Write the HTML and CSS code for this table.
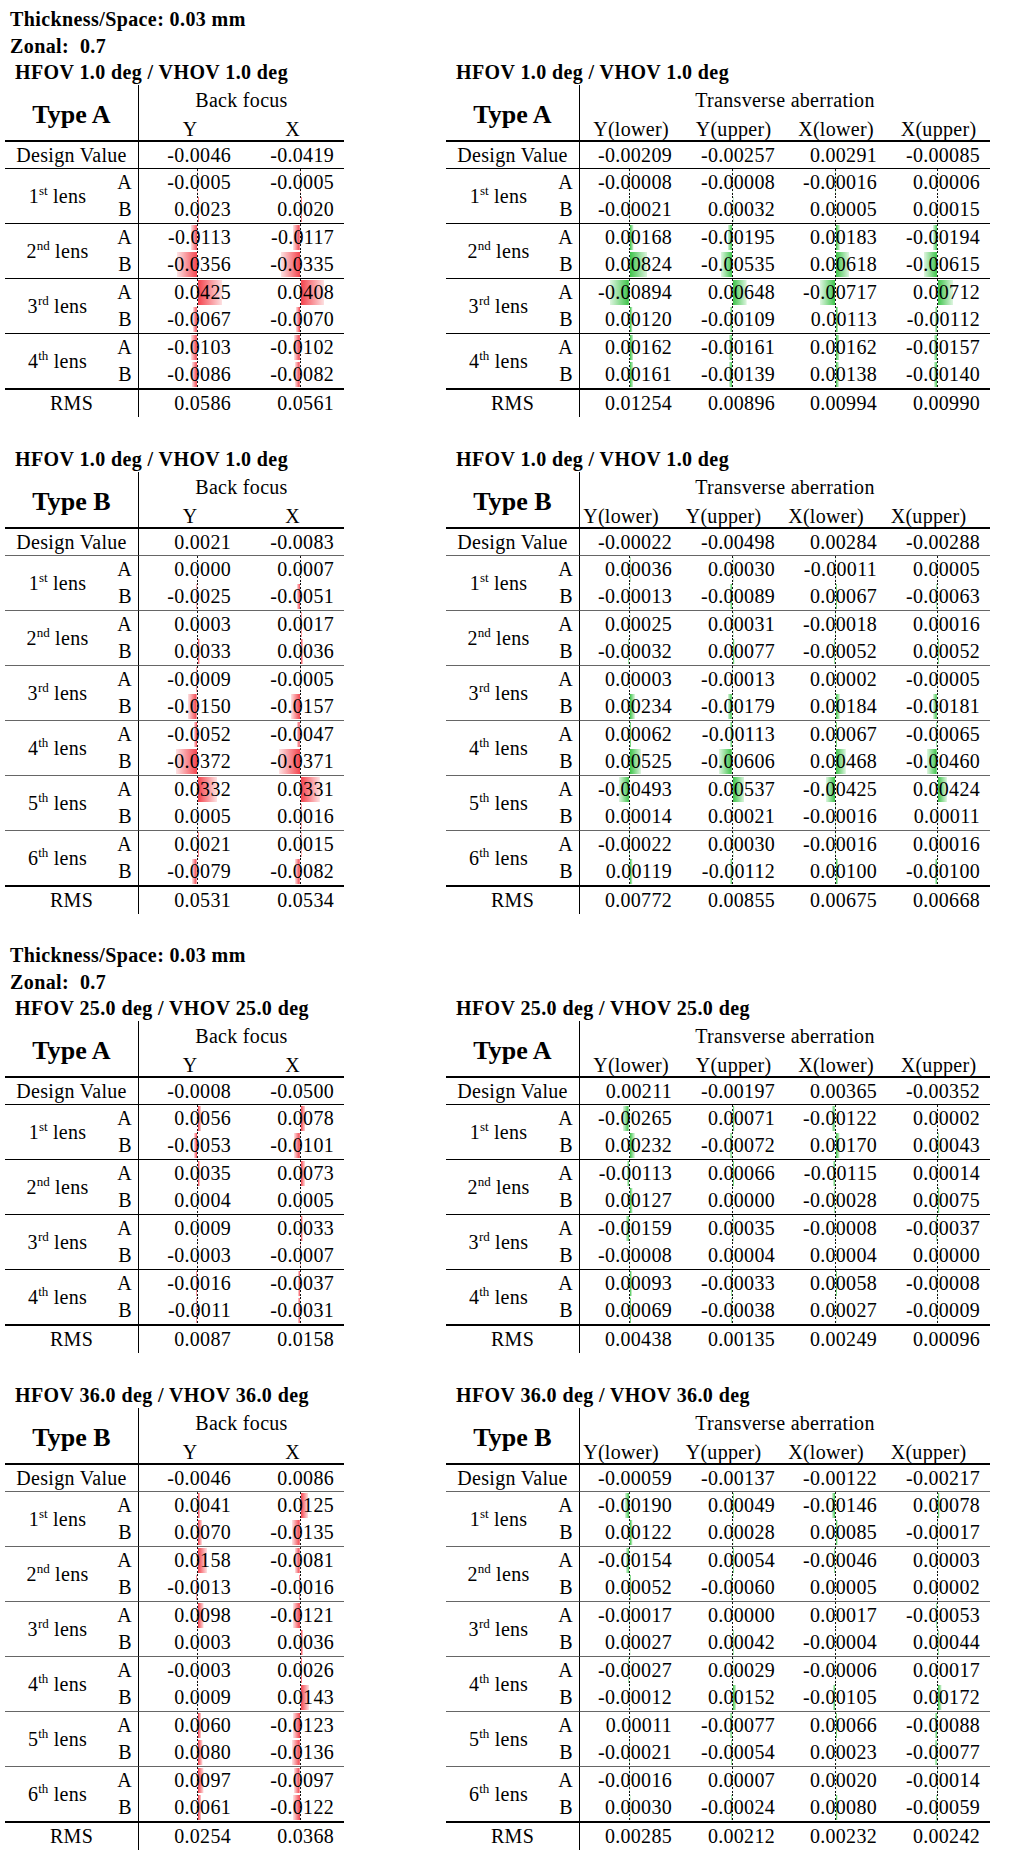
FILE: index.html
```html
<!DOCTYPE html>
<html lang="en">
<head>
<meta charset="utf-8">
<title>Tolerance tables</title>
<link rel="stylesheet" href="styles.css">
</head>
<body>

<div class="sec">
  <div class="meta">Thickness/Space: 0.03 mm</div>
  <div class="meta">Zonal:&nbsp; 0.7</div>

  <div class="pair">
    <div class="bl">
      <div class="ttl">HFOV 1.0 deg / VHOV 1.0 deg</div>
      <div class="tbl tl ta">
        <div class="c type">Type A</div>
        <div class="c grp vl">Back focus</div>
        <div class="c sub vl">Y</div>
        <div class="c sub">X</div>
        <div class="c lbl dsg">Design Value</div>
        <div class="c num dsg vl">-0.0046</div>
        <div class="c num dsg">-0.0419</div>

        <div class="c lens">1<sup>st</sup> lens</div>
        <div class="c ab">A</div>
        <div class="c num d vl n" style="--w:0.29px">-0.0005</div>
        <div class="c num d n" style="--w:0.29px">-0.0005</div>
        <div class="c ab b">B</div>
        <div class="c num d vl b p" style="--w:1.32px">0.0023</div>
        <div class="c num d b p" style="--w:1.14px">0.0020</div>

        <div class="c lens">2<sup>nd</sup> lens</div>
        <div class="c ab">A</div>
        <div class="c num d vl n" style="--w:6.46px">-0.0113</div>
        <div class="c num d n" style="--w:6.69px">-0.0117</div>
        <div class="c ab b">B</div>
        <div class="c num d vl b n" style="--w:20.36px">-0.0356</div>
        <div class="c num d b n" style="--w:19.16px">-0.0335</div>

        <div class="c lens">3<sup>rd</sup> lens</div>
        <div class="c ab">A</div>
        <div class="c num d vl p" style="--w:24.31px">0.0425</div>
        <div class="c num d p" style="--w:23.34px">0.0408</div>
        <div class="c ab b">B</div>
        <div class="c num d vl b n" style="--w:3.83px">-0.0067</div>
        <div class="c num d b n" style="--w:4px">-0.0070</div>

        <div class="c lens z">4<sup>th</sup> lens</div>
        <div class="c ab">A</div>
        <div class="c num d vl n" style="--w:5.89px">-0.0103</div>
        <div class="c num d n" style="--w:5.83px">-0.0102</div>
        <div class="c ab b z">B</div>
        <div class="c num d vl b z n" style="--w:4.92px">-0.0086</div>
        <div class="c num d b z n" style="--w:4.69px">-0.0082</div>

        <div class="c lbl">RMS</div>
        <div class="c num vl">0.0586</div>
        <div class="c num">0.0561</div>
      </div>
    </div>

    <div class="br">
      <div class="ttl">HFOV 1.0 deg / VHOV 1.0 deg</div>
      <div class="tbl tr ta">
        <div class="c type">Type A</div>
        <div class="c grp vl">Transverse aberration</div>
        <div class="c sub vl">Y(lower)</div>
        <div class="c sub">Y(upper)</div>
        <div class="c sub">X(lower)</div>
        <div class="c sub">X(upper)</div>
        <div class="c lbl dsg">Design Value</div>
        <div class="c num dsg vl">-0.00209</div>
        <div class="c num dsg">-0.00257</div>
        <div class="c num dsg">0.00291</div>
        <div class="c num dsg">-0.00085</div>

        <div class="c lens">1<sup>st</sup> lens</div>
        <div class="c ab">A</div>
        <div class="c num d vl n" style="--w:0.17px">-0.00008</div>
        <div class="c num d n" style="--w:0.17px">-0.00008</div>
        <div class="c num d n" style="--w:0.34px">-0.00016</div>
        <div class="c num d p" style="--w:0.13px">0.00006</div>
        <div class="c ab b">B</div>
        <div class="c num d vl b n" style="--w:0.44px">-0.00021</div>
        <div class="c num d b p" style="--w:0.68px">0.00032</div>
        <div class="c num d b p" style="--w:0.11px">0.00005</div>
        <div class="c num d b p" style="--w:0.32px">0.00015</div>

        <div class="c lens">2<sup>nd</sup> lens</div>
        <div class="c ab">A</div>
        <div class="c num d vl p" style="--w:3.54px">0.00168</div>
        <div class="c num d n" style="--w:4.11px">-0.00195</div>
        <div class="c num d p" style="--w:3.86px">0.00183</div>
        <div class="c num d n" style="--w:4.09px">-0.00194</div>
        <div class="c ab b">B</div>
        <div class="c num d vl b p" style="--w:17.39px">0.00824</div>
        <div class="c num d b n" style="--w:11.29px">-0.00535</div>
        <div class="c num d b p" style="--w:13.04px">0.00618</div>
        <div class="c num d b n" style="--w:12.98px">-0.00615</div>

        <div class="c lens">3<sup>rd</sup> lens</div>
        <div class="c ab">A</div>
        <div class="c num d vl n" style="--w:18.86px">-0.00894</div>
        <div class="c num d p" style="--w:13.67px">0.00648</div>
        <div class="c num d n" style="--w:15.13px">-0.00717</div>
        <div class="c num d p" style="--w:15.02px">0.00712</div>
        <div class="c ab b">B</div>
        <div class="c num d vl b p" style="--w:2.53px">0.00120</div>
        <div class="c num d b n" style="--w:2.3px">-0.00109</div>
        <div class="c num d b p" style="--w:2.38px">0.00113</div>
        <div class="c num d b n" style="--w:2.36px">-0.00112</div>

        <div class="c lens z">4<sup>th</sup> lens</div>
        <div class="c ab">A</div>
        <div class="c num d vl p" style="--w:3.42px">0.00162</div>
        <div class="c num d n" style="--w:3.4px">-0.00161</div>
        <div class="c num d p" style="--w:3.42px">0.00162</div>
        <div class="c num d n" style="--w:3.31px">-0.00157</div>
        <div class="c ab b z">B</div>
        <div class="c num d vl b z p" style="--w:3.4px">0.00161</div>
        <div class="c num d b z n" style="--w:2.93px">-0.00139</div>
        <div class="c num d b z p" style="--w:2.91px">0.00138</div>
        <div class="c num d b z n" style="--w:2.95px">-0.00140</div>

        <div class="c lbl">RMS</div>
        <div class="c num vl">0.01254</div>
        <div class="c num">0.00896</div>
        <div class="c num">0.00994</div>
        <div class="c num">0.00990</div>
      </div>
    </div>
  </div>

  <div class="pair">
    <div class="bl">
      <div class="ttl">HFOV 1.0 deg / VHOV 1.0 deg</div>
      <div class="tbl tl tb">
        <div class="c type">Type B</div>
        <div class="c grp vl">Back focus</div>
        <div class="c sub vl">Y</div>
        <div class="c sub">X</div>
        <div class="c lbl dsg">Design Value</div>
        <div class="c num dsg vl">0.0021</div>
        <div class="c num dsg">-0.0083</div>

        <div class="c lens">1<sup>st</sup> lens</div>
        <div class="c ab">A</div>
        <div class="c num d vl">0.0000</div>
        <div class="c num d p" style="--w:0.4px">0.0007</div>
        <div class="c ab b">B</div>
        <div class="c num d vl b n" style="--w:1.43px">-0.0025</div>
        <div class="c num d b n" style="--w:2.92px">-0.0051</div>

        <div class="c lens">2<sup>nd</sup> lens</div>
        <div class="c ab">A</div>
        <div class="c num d vl p" style="--w:0.17px">0.0003</div>
        <div class="c num d p" style="--w:0.97px">0.0017</div>
        <div class="c ab b">B</div>
        <div class="c num d vl b p" style="--w:1.89px">0.0033</div>
        <div class="c num d b p" style="--w:2.06px">0.0036</div>

        <div class="c lens">3<sup>rd</sup> lens</div>
        <div class="c ab">A</div>
        <div class="c num d vl n" style="--w:0.51px">-0.0009</div>
        <div class="c num d n" style="--w:0.29px">-0.0005</div>
        <div class="c ab b">B</div>
        <div class="c num d vl b n" style="--w:8.58px">-0.0150</div>
        <div class="c num d b n" style="--w:8.98px">-0.0157</div>

        <div class="c lens">4<sup>th</sup> lens</div>
        <div class="c ab">A</div>
        <div class="c num d vl n" style="--w:2.97px">-0.0052</div>
        <div class="c num d n" style="--w:2.69px">-0.0047</div>
        <div class="c ab b">B</div>
        <div class="c num d vl b n" style="--w:21.28px">-0.0372</div>
        <div class="c num d b n" style="--w:21.22px">-0.0371</div>

        <div class="c lens">5<sup>th</sup> lens</div>
        <div class="c ab">A</div>
        <div class="c num d vl p" style="--w:18.99px">0.0332</div>
        <div class="c num d p" style="--w:18.93px">0.0331</div>
        <div class="c ab b">B</div>
        <div class="c num d vl b p" style="--w:0.29px">0.0005</div>
        <div class="c num d b p" style="--w:0.92px">0.0016</div>

        <div class="c lens z">6<sup>th</sup> lens</div>
        <div class="c ab">A</div>
        <div class="c num d vl p" style="--w:1.2px">0.0021</div>
        <div class="c num d p" style="--w:0.86px">0.0015</div>
        <div class="c ab b z">B</div>
        <div class="c num d vl b z n" style="--w:4.52px">-0.0079</div>
        <div class="c num d b z n" style="--w:4.69px">-0.0082</div>

        <div class="c lbl">RMS</div>
        <div class="c num vl">0.0531</div>
        <div class="c num">0.0534</div>
      </div>
    </div>

    <div class="br">
      <div class="ttl">HFOV 1.0 deg / VHOV 1.0 deg</div>
      <div class="tbl tr tb">
        <div class="c type">Type B</div>
        <div class="c grp vl">Transverse aberration</div>
        <div class="c sub vl">Y(lower)</div>
        <div class="c sub">Y(upper)</div>
        <div class="c sub">X(lower)</div>
        <div class="c sub">X(upper)</div>
        <div class="c lbl dsg">Design Value</div>
        <div class="c num dsg vl">-0.00022</div>
        <div class="c num dsg">-0.00498</div>
        <div class="c num dsg">0.00284</div>
        <div class="c num dsg">-0.00288</div>

        <div class="c lens">1<sup>st</sup> lens</div>
        <div class="c ab">A</div>
        <div class="c num d vl p" style="--w:0.76px">0.00036</div>
        <div class="c num d p" style="--w:0.63px">0.00030</div>
        <div class="c num d n" style="--w:0.23px">-0.00011</div>
        <div class="c num d p" style="--w:0.11px">0.00005</div>
        <div class="c ab b">B</div>
        <div class="c num d vl b n" style="--w:0.27px">-0.00013</div>
        <div class="c num d b n" style="--w:1.88px">-0.00089</div>
        <div class="c num d b p" style="--w:1.41px">0.00067</div>
        <div class="c num d b n" style="--w:1.33px">-0.00063</div>

        <div class="c lens">2<sup>nd</sup> lens</div>
        <div class="c ab">A</div>
        <div class="c num d vl p" style="--w:0.53px">0.00025</div>
        <div class="c num d p" style="--w:0.65px">0.00031</div>
        <div class="c num d n" style="--w:0.38px">-0.00018</div>
        <div class="c num d p" style="--w:0.34px">0.00016</div>
        <div class="c ab b">B</div>
        <div class="c num d vl b n" style="--w:0.68px">-0.00032</div>
        <div class="c num d b p" style="--w:1.62px">0.00077</div>
        <div class="c num d b n" style="--w:1.1px">-0.00052</div>
        <div class="c num d b p" style="--w:1.1px">0.00052</div>

        <div class="c lens">3<sup>rd</sup> lens</div>
        <div class="c ab">A</div>
        <div class="c num d vl p" style="--w:0.06px">0.00003</div>
        <div class="c num d n" style="--w:0.27px">-0.00013</div>
        <div class="c num d p" style="--w:0.04px">0.00002</div>
        <div class="c num d n" style="--w:0.11px">-0.00005</div>
        <div class="c ab b">B</div>
        <div class="c num d vl b p" style="--w:4.94px">0.00234</div>
        <div class="c num d b n" style="--w:3.78px">-0.00179</div>
        <div class="c num d b p" style="--w:3.88px">0.00184</div>
        <div class="c num d b n" style="--w:3.82px">-0.00181</div>

        <div class="c lens">4<sup>th</sup> lens</div>
        <div class="c ab">A</div>
        <div class="c num d vl p" style="--w:1.31px">0.00062</div>
        <div class="c num d n" style="--w:2.38px">-0.00113</div>
        <div class="c num d p" style="--w:1.41px">0.00067</div>
        <div class="c num d n" style="--w:1.37px">-0.00065</div>
        <div class="c ab b">B</div>
        <div class="c num d vl b p" style="--w:11.08px">0.00525</div>
        <div class="c num d b n" style="--w:12.79px">-0.00606</div>
        <div class="c num d b p" style="--w:9.87px">0.00468</div>
        <div class="c num d b n" style="--w:9.71px">-0.00460</div>

        <div class="c lens">5<sup>th</sup> lens</div>
        <div class="c ab">A</div>
        <div class="c num d vl n" style="--w:10.4px">-0.00493</div>
        <div class="c num d p" style="--w:11.33px">0.00537</div>
        <div class="c num d n" style="--w:8.97px">-0.00425</div>
        <div class="c num d p" style="--w:8.95px">0.00424</div>
        <div class="c ab b">B</div>
        <div class="c num d vl b p" style="--w:0.3px">0.00014</div>
        <div class="c num d b p" style="--w:0.44px">0.00021</div>
        <div class="c num d b n" style="--w:0.34px">-0.00016</div>
        <div class="c num d b p" style="--w:0.23px">0.00011</div>

        <div class="c lens z">6<sup>th</sup> lens</div>
        <div class="c ab">A</div>
        <div class="c num d vl n" style="--w:0.46px">-0.00022</div>
        <div class="c num d p" style="--w:0.63px">0.00030</div>
        <div class="c num d n" style="--w:0.34px">-0.00016</div>
        <div class="c num d p" style="--w:0.34px">0.00016</div>
        <div class="c ab b z">B</div>
        <div class="c num d vl b z p" style="--w:2.51px">0.00119</div>
        <div class="c num d b z n" style="--w:2.36px">-0.00112</div>
        <div class="c num d b z p" style="--w:2.11px">0.00100</div>
        <div class="c num d b z n" style="--w:2.11px">-0.00100</div>

        <div class="c lbl">RMS</div>
        <div class="c num vl">0.00772</div>
        <div class="c num">0.00855</div>
        <div class="c num">0.00675</div>
        <div class="c num">0.00668</div>
      </div>
    </div>
  </div>
</div>

<div class="sec">
  <div class="meta">Thickness/Space: 0.03 mm</div>
  <div class="meta">Zonal:&nbsp; 0.7</div>

  <div class="pair">
    <div class="bl">
      <div class="ttl">HFOV 25.0 deg / VHOV 25.0 deg</div>
      <div class="tbl tl ta">
        <div class="c type">Type A</div>
        <div class="c grp vl">Back focus</div>
        <div class="c sub vl">Y</div>
        <div class="c sub">X</div>
        <div class="c lbl dsg">Design Value</div>
        <div class="c num dsg vl">-0.0008</div>
        <div class="c num dsg">-0.0500</div>

        <div class="c lens">1<sup>st</sup> lens</div>
        <div class="c ab">A</div>
        <div class="c num d vl p" style="--w:3.2px">0.0056</div>
        <div class="c num d p" style="--w:4.46px">0.0078</div>
        <div class="c ab b">B</div>
        <div class="c num d vl b n" style="--w:3.03px">-0.0053</div>
        <div class="c num d b n" style="--w:5.78px">-0.0101</div>

        <div class="c lens">2<sup>nd</sup> lens</div>
        <div class="c ab">A</div>
        <div class="c num d vl p" style="--w:2px">0.0035</div>
        <div class="c num d p" style="--w:4.18px">0.0073</div>
        <div class="c ab b">B</div>
        <div class="c num d vl b p" style="--w:0.23px">0.0004</div>
        <div class="c num d b p" style="--w:0.29px">0.0005</div>

        <div class="c lens">3<sup>rd</sup> lens</div>
        <div class="c ab">A</div>
        <div class="c num d vl p" style="--w:0.51px">0.0009</div>
        <div class="c num d p" style="--w:1.89px">0.0033</div>
        <div class="c ab b">B</div>
        <div class="c num d vl b n" style="--w:0.17px">-0.0003</div>
        <div class="c num d b n" style="--w:0.4px">-0.0007</div>

        <div class="c lens z">4<sup>th</sup> lens</div>
        <div class="c ab">A</div>
        <div class="c num d vl n" style="--w:0.92px">-0.0016</div>
        <div class="c num d n" style="--w:2.12px">-0.0037</div>
        <div class="c ab b z">B</div>
        <div class="c num d vl b z n" style="--w:0.63px">-0.0011</div>
        <div class="c num d b z n" style="--w:1.77px">-0.0031</div>

        <div class="c lbl">RMS</div>
        <div class="c num vl">0.0087</div>
        <div class="c num">0.0158</div>
      </div>
    </div>

    <div class="br">
      <div class="ttl">HFOV 25.0 deg / VHOV 25.0 deg</div>
      <div class="tbl tr ta">
        <div class="c type">Type A</div>
        <div class="c grp vl">Transverse aberration</div>
        <div class="c sub vl">Y(lower)</div>
        <div class="c sub">Y(upper)</div>
        <div class="c sub">X(lower)</div>
        <div class="c sub">X(upper)</div>
        <div class="c lbl dsg">Design Value</div>
        <div class="c num dsg vl">0.00211</div>
        <div class="c num dsg">-0.00197</div>
        <div class="c num dsg">0.00365</div>
        <div class="c num dsg">-0.00352</div>

        <div class="c lens">1<sup>st</sup> lens</div>
        <div class="c ab">A</div>
        <div class="c num d vl n" style="--w:5.59px">-0.00265</div>
        <div class="c num d p" style="--w:1.5px">0.00071</div>
        <div class="c num d n" style="--w:2.57px">-0.00122</div>
        <div class="c num d p" style="--w:0.04px">0.00002</div>
        <div class="c ab b">B</div>
        <div class="c num d vl b p" style="--w:4.9px">0.00232</div>
        <div class="c num d b n" style="--w:1.52px">-0.00072</div>
        <div class="c num d b p" style="--w:3.59px">0.00170</div>
        <div class="c num d b p" style="--w:0.91px">0.00043</div>

        <div class="c lens">2<sup>nd</sup> lens</div>
        <div class="c ab">A</div>
        <div class="c num d vl n" style="--w:2.38px">-0.00113</div>
        <div class="c num d p" style="--w:1.39px">0.00066</div>
        <div class="c num d n" style="--w:2.43px">-0.00115</div>
        <div class="c num d p" style="--w:0.3px">0.00014</div>
        <div class="c ab b">B</div>
        <div class="c num d vl b p" style="--w:2.68px">0.00127</div>
        <div class="c num d b">0.00000</div>
        <div class="c num d b n" style="--w:0.59px">-0.00028</div>
        <div class="c num d b p" style="--w:1.58px">0.00075</div>

        <div class="c lens">3<sup>rd</sup> lens</div>
        <div class="c ab">A</div>
        <div class="c num d vl n" style="--w:3.35px">-0.00159</div>
        <div class="c num d p" style="--w:0.74px">0.00035</div>
        <div class="c num d n" style="--w:0.17px">-0.00008</div>
        <div class="c num d n" style="--w:0.78px">-0.00037</div>
        <div class="c ab b">B</div>
        <div class="c num d vl b n" style="--w:0.17px">-0.00008</div>
        <div class="c num d b p" style="--w:0.08px">0.00004</div>
        <div class="c num d b p" style="--w:0.08px">0.00004</div>
        <div class="c num d b">0.00000</div>

        <div class="c lens z">4<sup>th</sup> lens</div>
        <div class="c ab">A</div>
        <div class="c num d vl p" style="--w:1.96px">0.00093</div>
        <div class="c num d n" style="--w:0.7px">-0.00033</div>
        <div class="c num d p" style="--w:1.22px">0.00058</div>
        <div class="c num d n" style="--w:0.17px">-0.00008</div>
        <div class="c ab b z">B</div>
        <div class="c num d vl b z p" style="--w:1.46px">0.00069</div>
        <div class="c num d b z n" style="--w:0.8px">-0.00038</div>
        <div class="c num d b z p" style="--w:0.57px">0.00027</div>
        <div class="c num d b z n" style="--w:0.19px">-0.00009</div>

        <div class="c lbl">RMS</div>
        <div class="c num vl">0.00438</div>
        <div class="c num">0.00135</div>
        <div class="c num">0.00249</div>
        <div class="c num">0.00096</div>
      </div>
    </div>
  </div>

  <div class="pair">
    <div class="bl">
      <div class="ttl">HFOV 36.0 deg / VHOV 36.0 deg</div>
      <div class="tbl tl tb">
        <div class="c type">Type B</div>
        <div class="c grp vl">Back focus</div>
        <div class="c sub vl">Y</div>
        <div class="c sub">X</div>
        <div class="c lbl dsg">Design Value</div>
        <div class="c num dsg vl">-0.0046</div>
        <div class="c num dsg">0.0086</div>

        <div class="c lens">1<sup>st</sup> lens</div>
        <div class="c ab">A</div>
        <div class="c num d vl p" style="--w:2.35px">0.0041</div>
        <div class="c num d p" style="--w:7.15px">0.0125</div>
        <div class="c ab b">B</div>
        <div class="c num d vl b p" style="--w:4px">0.0070</div>
        <div class="c num d b n" style="--w:7.72px">-0.0135</div>

        <div class="c lens">2<sup>nd</sup> lens</div>
        <div class="c ab">A</div>
        <div class="c num d vl p" style="--w:9.04px">0.0158</div>
        <div class="c num d n" style="--w:4.63px">-0.0081</div>
        <div class="c ab b">B</div>
        <div class="c num d vl b n" style="--w:0.74px">-0.0013</div>
        <div class="c num d b n" style="--w:0.92px">-0.0016</div>

        <div class="c lens">3<sup>rd</sup> lens</div>
        <div class="c ab">A</div>
        <div class="c num d vl p" style="--w:5.61px">0.0098</div>
        <div class="c num d n" style="--w:6.92px">-0.0121</div>
        <div class="c ab b">B</div>
        <div class="c num d vl b p" style="--w:0.17px">0.0003</div>
        <div class="c num d b p" style="--w:2.06px">0.0036</div>

        <div class="c lens">4<sup>th</sup> lens</div>
        <div class="c ab">A</div>
        <div class="c num d vl n" style="--w:0.17px">-0.0003</div>
        <div class="c num d p" style="--w:1.49px">0.0026</div>
        <div class="c ab b">B</div>
        <div class="c num d vl b p" style="--w:0.51px">0.0009</div>
        <div class="c num d b p" style="--w:8.18px">0.0143</div>

        <div class="c lens">5<sup>th</sup> lens</div>
        <div class="c ab">A</div>
        <div class="c num d vl p" style="--w:3.43px">0.0060</div>
        <div class="c num d n" style="--w:7.04px">-0.0123</div>
        <div class="c ab b">B</div>
        <div class="c num d vl b p" style="--w:4.58px">0.0080</div>
        <div class="c num d b n" style="--w:7.78px">-0.0136</div>

        <div class="c lens z">6<sup>th</sup> lens</div>
        <div class="c ab">A</div>
        <div class="c num d vl p" style="--w:5.55px">0.0097</div>
        <div class="c num d n" style="--w:5.55px">-0.0097</div>
        <div class="c ab b z">B</div>
        <div class="c num d vl b z p" style="--w:3.49px">0.0061</div>
        <div class="c num d b z n" style="--w:6.98px">-0.0122</div>

        <div class="c lbl">RMS</div>
        <div class="c num vl">0.0254</div>
        <div class="c num">0.0368</div>
      </div>
    </div>

    <div class="br">
      <div class="ttl">HFOV 36.0 deg / VHOV 36.0 deg</div>
      <div class="tbl tr tb">
        <div class="c type">Type B</div>
        <div class="c grp vl">Transverse aberration</div>
        <div class="c sub vl">Y(lower)</div>
        <div class="c sub">Y(upper)</div>
        <div class="c sub">X(lower)</div>
        <div class="c sub">X(upper)</div>
        <div class="c lbl dsg">Design Value</div>
        <div class="c num dsg vl">-0.00059</div>
        <div class="c num dsg">-0.00137</div>
        <div class="c num dsg">-0.00122</div>
        <div class="c num dsg">-0.00217</div>

        <div class="c lens">1<sup>st</sup> lens</div>
        <div class="c ab">A</div>
        <div class="c num d vl n" style="--w:4.01px">-0.00190</div>
        <div class="c num d p" style="--w:1.03px">0.00049</div>
        <div class="c num d n" style="--w:3.08px">-0.00146</div>
        <div class="c num d p" style="--w:1.65px">0.00078</div>
        <div class="c ab b">B</div>
        <div class="c num d vl b p" style="--w:2.57px">0.00122</div>
        <div class="c num d b p" style="--w:0.59px">0.00028</div>
        <div class="c num d b p" style="--w:1.79px">0.00085</div>
        <div class="c num d b n" style="--w:0.36px">-0.00017</div>

        <div class="c lens">2<sup>nd</sup> lens</div>
        <div class="c ab">A</div>
        <div class="c num d vl n" style="--w:3.25px">-0.00154</div>
        <div class="c num d p" style="--w:1.14px">0.00054</div>
        <div class="c num d n" style="--w:0.97px">-0.00046</div>
        <div class="c num d p" style="--w:0.06px">0.00003</div>
        <div class="c ab b">B</div>
        <div class="c num d vl b p" style="--w:1.1px">0.00052</div>
        <div class="c num d b n" style="--w:1.27px">-0.00060</div>
        <div class="c num d b p" style="--w:0.11px">0.00005</div>
        <div class="c num d b p" style="--w:0.04px">0.00002</div>

        <div class="c lens">3<sup>rd</sup> lens</div>
        <div class="c ab">A</div>
        <div class="c num d vl n" style="--w:0.36px">-0.00017</div>
        <div class="c num d">0.00000</div>
        <div class="c num d p" style="--w:0.36px">0.00017</div>
        <div class="c num d n" style="--w:1.12px">-0.00053</div>
        <div class="c ab b">B</div>
        <div class="c num d vl b p" style="--w:0.57px">0.00027</div>
        <div class="c num d b p" style="--w:0.89px">0.00042</div>
        <div class="c num d b n" style="--w:0.08px">-0.00004</div>
        <div class="c num d b p" style="--w:0.93px">0.00044</div>

        <div class="c lens">4<sup>th</sup> lens</div>
        <div class="c ab">A</div>
        <div class="c num d vl n" style="--w:0.57px">-0.00027</div>
        <div class="c num d p" style="--w:0.61px">0.00029</div>
        <div class="c num d n" style="--w:0.13px">-0.00006</div>
        <div class="c num d p" style="--w:0.36px">0.00017</div>
        <div class="c ab b">B</div>
        <div class="c num d vl b n" style="--w:0.25px">-0.00012</div>
        <div class="c num d b p" style="--w:3.21px">0.00152</div>
        <div class="c num d b n" style="--w:2.22px">-0.00105</div>
        <div class="c num d b p" style="--w:3.63px">0.00172</div>

        <div class="c lens">5<sup>th</sup> lens</div>
        <div class="c ab">A</div>
        <div class="c num d vl p" style="--w:0.23px">0.00011</div>
        <div class="c num d n" style="--w:1.62px">-0.00077</div>
        <div class="c num d p" style="--w:1.39px">0.00066</div>
        <div class="c num d n" style="--w:1.86px">-0.00088</div>
        <div class="c ab b">B</div>
        <div class="c num d vl b n" style="--w:0.44px">-0.00021</div>
        <div class="c num d b n" style="--w:1.14px">-0.00054</div>
        <div class="c num d b p" style="--w:0.49px">0.00023</div>
        <div class="c num d b n" style="--w:1.62px">-0.00077</div>

        <div class="c lens z">6<sup>th</sup> lens</div>
        <div class="c ab">A</div>
        <div class="c num d vl n" style="--w:0.34px">-0.00016</div>
        <div class="c num d p" style="--w:0.15px">0.00007</div>
        <div class="c num d p" style="--w:0.42px">0.00020</div>
        <div class="c num d n" style="--w:0.3px">-0.00014</div>
        <div class="c ab b z">B</div>
        <div class="c num d vl b z p" style="--w:0.63px">0.00030</div>
        <div class="c num d b z n" style="--w:0.51px">-0.00024</div>
        <div class="c num d b z p" style="--w:1.69px">0.00080</div>
        <div class="c num d b z n" style="--w:1.24px">-0.00059</div>

        <div class="c lbl">RMS</div>
        <div class="c num vl">0.00285</div>
        <div class="c num">0.00212</div>
        <div class="c num">0.00232</div>
        <div class="c num">0.00242</div>
      </div>
    </div>
  </div>
</div>

</body>
</html>
```

FILE: styles.css
```css
* { box-sizing: border-box; }

html, body {
  margin: 0;
  padding: 0;
  background: #fff;
}

body {
  width: 1009px;
  font-family: "Liberation Serif", "Times New Roman", serif;
  font-size: 20px;
  letter-spacing: 0.3px;
  color: #000;
}

.sec { padding: 6px 0 22px; }
.sec:last-child { padding-bottom: 19px; }

.meta {
  height: 27px;
  line-height: 27px;
  padding-left: 10px;
  font-weight: bold;
  letter-spacing: 0.4px;
  white-space: nowrap;
}

.pair { display: flex; align-items: flex-start; }
.pair + .pair { margin-top: 30px; }

.bl { width: 339px; margin-left: 5px; }
.br { width: 544px; margin-left: 102px; }

.ttl {
  height: 25px;
  line-height: 25px;
  padding-left: 10px;
  font-weight: bold;
  letter-spacing: 0.4px;
  white-space: nowrap;
}

/* ---------- table grid ---------- */
.tbl {
  display: grid;
  --ln: #000;
  --axis: repeating-linear-gradient(to bottom, #111 0 2px, transparent 2px 4px);
}
.tb { --ln: #666; }

.tl {
  grid-template-columns: 105px 28px 103px 103px;
  --ax: 59px;
  --c1: #f4434d;
  --c2: #fde2e3;
}
.tr {
  grid-template-columns: 105px 28px 103px 103px 102px 103px;
  --ax: 50px;
  --c1: #3ec44a;
  --c2: #def5e0;
}

.c {
  height: 27px;
  line-height: 27px;
  white-space: nowrap;
}

.type {
  grid-column: span 2;
  grid-row: span 2;
  height: 57px;
  padding-top: 4px;
  line-height: 51px;
  text-align: center;
  font-size: 26px;
  font-weight: bold;
  letter-spacing: 0;
  border-bottom: 2px solid #000;
}

.grp {
  grid-column: span 2;
  height: 30px;
  line-height: 30px;
  text-align: center;
}
.tr .grp { grid-column: span 4; }

.sub {
  height: 27px;
  padding-top: 4px;
  line-height: 21px;
  text-align: center;
  border-bottom: 2px solid #000;
}
.tb.tr .sub { padding-right: 20px; }

.lbl { grid-column: span 2; text-align: center; }

.dsg {
  line-height: 26px;
  border-bottom: 1px solid var(--ln);
}

.vl { border-left: 1px solid #000; }

.num { text-align: right; padding-right: 10px; }

.lens {
  grid-row: span 2;
  height: 55px;
  line-height: 54px;
  text-align: center;
  border-bottom: 1px solid var(--ln);
}
.lens.z { height: 56px; border-bottom: 2px solid #000; }

.ab { text-align: right; padding-right: 6px; }

.b { height: 28px; border-bottom: 1px solid var(--ln); }
.b.z { height: 29px; border-bottom: 2px solid #000; }

sup {
  font-size: 13px;
  line-height: 0;
  vertical-align: 8px;
  letter-spacing: 0;
}

/* ---------- axis and data bars ---------- */
.d {
  background-image: var(--axis);
  background-size: 1px 100%;
  background-position: var(--ax) 0;
  background-repeat: no-repeat;
  background-origin: border-box;
}
.d.p {
  background-image: var(--axis), linear-gradient(to right, var(--c1), var(--c2));
  background-size: 1px 100%, var(--w) 25px;
  background-position: var(--ax) 0, calc(var(--ax) + 1px) 1px;
}
.d.n {
  background-image: var(--axis), linear-gradient(to left, var(--c1), var(--c2));
  background-size: 1px 100%, var(--w) 25px;
  background-position: var(--ax) 0, calc(var(--ax) - var(--w)) 1px;
}
```
